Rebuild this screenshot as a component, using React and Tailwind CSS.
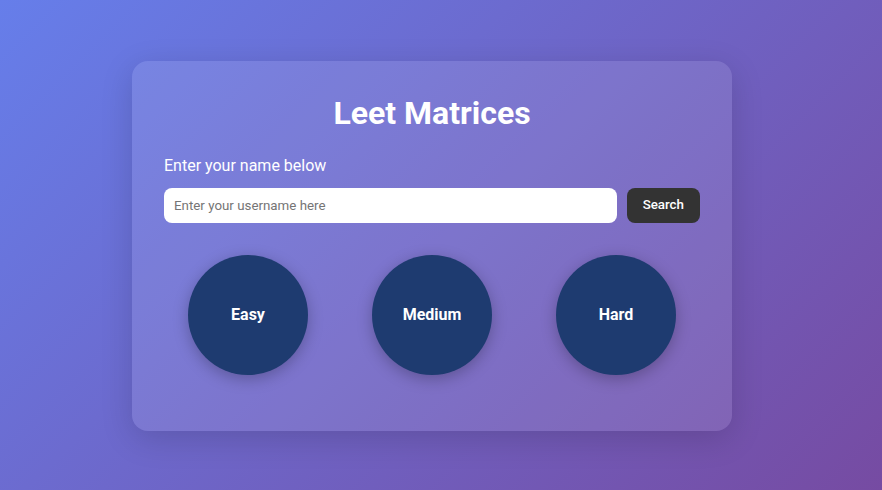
export default function App() {
  return (
    <div
      className="min-h-screen w-full flex items-center justify-center pr-[18px] pt-[1px] bg-[linear-gradient(135deg,#667eea_0%,#764ba2_100%)]"
      style={{ fontFamily: "Roboto, 'Liberation Sans', sans-serif" }}
    >
      <div className="w-[600px] rounded-[16px] bg-white/10 shadow-[0_8px_32px_rgba(0,0,0,0.15)] px-8 pt-[34px] pb-14">
        <h1 className="text-[32px] leading-[37px] font-bold text-white text-center">Leet Matrices</h1>
        <p className="mt-6 text-[16px] leading-[19px] text-white">Enter your name below</p>
        <div className="mt-[13px] flex items-center gap-[10px]">
          <input
            type="text"
            placeholder="Enter your username here"
            className="flex-1 h-[35px] rounded-lg bg-white px-[10px] text-[13.33px] text-gray-800 placeholder:text-[#757575] outline-none"
          />
          <button className="h-[35px] rounded-lg bg-[#333333] px-4 text-[13.33px] font-medium text-white">
            Search
          </button>
        </div>
        <div className="mt-8 flex justify-center gap-16">
          {["Easy", "Medium", "Hard"].map((l) => (
            <div
              key={l}
              className="w-[120px] h-[120px] rounded-full bg-[#1e3b70] flex items-center justify-center text-white font-bold text-[16px] shadow-[0_4px_15px_rgba(0,0,0,0.25)]"
            >
              {l}
            </div>
          ))}
        </div>
      </div>
    </div>
  );
}
